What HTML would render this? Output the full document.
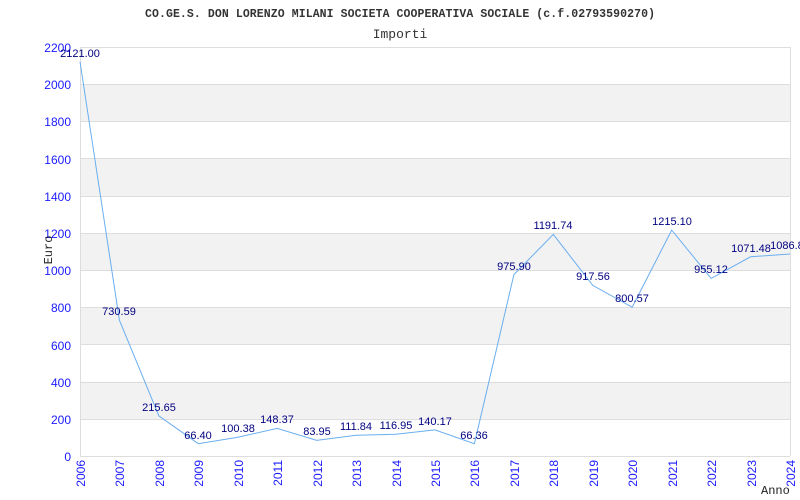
<!DOCTYPE html>
<html><head><style>body{margin:0;background:#fff}svg{display:block}</style></head><body>
<svg width="800" height="500" xmlns="http://www.w3.org/2000/svg">
<rect width="800" height="500" fill="#fff"/>
<text x="400" y="17" text-anchor="middle" textLength="510" font-family="Liberation Mono, monospace" font-size="11.5" font-weight="bold" fill="#333">CO.GE.S. DON LORENZO MILANI SOCIETA COOPERATIVA SOCIALE (c.f.02793590270)</text>
<text x="400" y="38" text-anchor="middle" font-family="Liberation Mono, monospace" font-size="13" fill="#333">Importi</text>
<g fill="#f2f2f2">
<rect x="80" y="84.2" width="710" height="37.2"/><rect x="80" y="158.6" width="710" height="37.2"/><rect x="80" y="233" width="710" height="37.2"/><rect x="80" y="307.3" width="710" height="37.2"/><rect x="80" y="381.7" width="710" height="37.2"/>
</g>
<g stroke="#ddd" stroke-width="1">
<line x1="80" y1="47.5" x2="790" y2="47.5"/><line x1="80" y1="84.5" x2="790" y2="84.5"/><line x1="80" y1="121.5" x2="790" y2="121.5"/><line x1="80" y1="158.5" x2="790" y2="158.5"/><line x1="80" y1="196.5" x2="790" y2="196.5"/><line x1="80" y1="233.5" x2="790" y2="233.5"/><line x1="80" y1="270.5" x2="790" y2="270.5"/><line x1="80" y1="307.5" x2="790" y2="307.5"/><line x1="80" y1="344.5" x2="790" y2="344.5"/><line x1="80" y1="382.5" x2="790" y2="382.5"/><line x1="80" y1="419.5" x2="790" y2="419.5"/><line x1="80" y1="456.5" x2="790" y2="456.5"/>
<line x1="80.5" y1="47" x2="80.5" y2="456"/><line x1="790.5" y1="47" x2="790.5" y2="456"/>
</g>
<g font-family="Liberation Sans, sans-serif" font-size="12" fill="#1a1aff" text-anchor="end">
<text x="71" y="52">2200</text><text x="71" y="89">2000</text><text x="71" y="126">1800</text><text x="71" y="164">1600</text><text x="71" y="201">1400</text><text x="71" y="238">1200</text><text x="71" y="275">1000</text><text x="71" y="312">800</text><text x="71" y="350">600</text><text x="71" y="387">400</text><text x="71" y="424">200</text><text x="71" y="461">0</text>
</g>
<g font-family="Liberation Sans, sans-serif" font-size="12" fill="#1a1aff" text-anchor="end">
<text transform="translate(85,460) rotate(-90)">2006</text><text transform="translate(124,460) rotate(-90)">2007</text><text transform="translate(164,460) rotate(-90)">2008</text><text transform="translate(203,460) rotate(-90)">2009</text><text transform="translate(243,460) rotate(-90)">2010</text><text transform="translate(282,460) rotate(-90)">2011</text><text transform="translate(322,460) rotate(-90)">2012</text><text transform="translate(361,460) rotate(-90)">2013</text><text transform="translate(401,460) rotate(-90)">2014</text><text transform="translate(440,460) rotate(-90)">2015</text><text transform="translate(479,460) rotate(-90)">2016</text><text transform="translate(519,460) rotate(-90)">2017</text><text transform="translate(558,460) rotate(-90)">2018</text><text transform="translate(598,460) rotate(-90)">2019</text><text transform="translate(637,460) rotate(-90)">2020</text><text transform="translate(677,460) rotate(-90)">2021</text><text transform="translate(716,460) rotate(-90)">2022</text><text transform="translate(756,460) rotate(-90)">2023</text><text transform="translate(795,460) rotate(-90)">2024</text>
</g>
<text transform="translate(52,250) rotate(-90)" text-anchor="middle" font-family="Liberation Mono, monospace" font-size="12" fill="#222">Euro</text>
<text x="761" y="494" font-family="Liberation Mono, monospace" font-size="12" fill="#222">Anno</text>
<polyline fill="none" stroke="#6aaef0" stroke-width="1" points="80,61.7 119.4,320.2 158.9,415.9 198.3,443.7 237.8,437.3 277.2,428.4 316.7,440.4 356.1,435.2 395.6,434.3 435,429.9 474.4,443.7 513.9,274.6 553.3,234.4 592.8,285.4 632.2,307.2 671.7,230.1 711.1,278.4 750.6,256.8 790,254"/>
<g font-family="Liberation Sans, sans-serif" font-size="11" fill="#000080" text-anchor="middle">
<text x="80" y="57">2121.00</text><text x="119" y="315">730.59</text><text x="159" y="411">215.65</text><text x="198" y="439">66.40</text><text x="238" y="432">100.38</text><text x="277" y="423">148.37</text><text x="317" y="435">83.95</text><text x="356" y="430">111.84</text><text x="396" y="429">116.95</text><text x="435" y="425">140.17</text><text x="474" y="439">66.36</text><text x="514" y="270">975.90</text><text x="553" y="229">1191.74</text><text x="593" y="280">917.56</text><text x="632" y="302">800.57</text><text x="672" y="225">1215.10</text><text x="711" y="273">955.12</text><text x="751" y="252">1071.48</text><text x="790" y="249">1086.80</text>
</g>
</svg>
</body></html>
